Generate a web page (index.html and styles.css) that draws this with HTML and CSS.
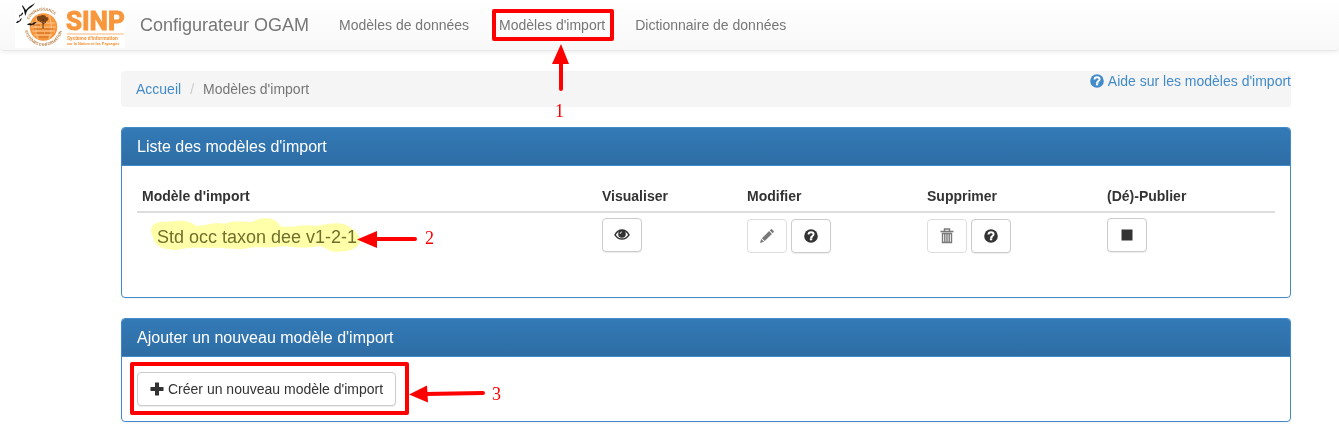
FILE: index.html
```html
<!DOCTYPE html>
<html lang="fr">
<head>
<meta charset="utf-8">
<title>Configurateur OGAM</title>
<link rel="stylesheet" href="styles.css">
</head>
<body>
<svg class="defs" aria-hidden="true">
  <symbol id="i-question" viewBox="0 0 14 14"><circle cx="7" cy="7" r="6.8" fill="currentColor"/><path d="M4.500 5.600C4.500 3.900 5.500 3.200 7.100 3.200s2.500.8 2.500 2c0 1.600-2 1.600-2 3.200H6.200" fill="none" stroke="#fff" stroke-width="1.900"/><rect x="5.900" y="9.300" width="2.300" height="2" fill="#fff"/></symbol>
  <symbol id="i-eye" viewBox="0 0 16 14"><path d="M1 6.800C3 3.500 5.300 2.100 8 2.100s5 1.400 7 4.700c-2 3-4.300 4.300-7 4.300S3 9.800 1 6.800z" fill="none" stroke="currentColor" stroke-width="1.500"/><circle cx="8" cy="5.900" r="3.800" fill="currentColor"/><path d="M6.200 5.800a2 2 0 0 1 1.600-1.900" fill="none" stroke="#fff" stroke-width="1"/></symbol>
  <symbol id="i-pencil" viewBox="0 0 14 14"><path d="M0 14l1.200-4 2.800 2.800zM1.900 9.300l7.200-7.200 2.800 2.800-7.200 7.200zM9.800 1.400l1-1c.4-.4.900-.4 1.300 0l1.500 1.500c.4.4.4.9 0 1.300l-1 1z" fill="currentColor"/></symbol>
  <symbol id="i-trash" viewBox="0 0 14 16"><path d="M4.500 3V1h5v2M.5 3.500h13M2.500 5.500h9v9h-9zM4.800 5.500v9M7 5.500v9M9.200 5.500v9" fill="none" stroke="currentColor" stroke-width="1.400"/></symbol>
  <symbol id="i-stop" viewBox="0 0 14 14"><path d="M1.500 1.500h11v11h-11z" fill="currentColor"/></symbol>
  <symbol id="i-plus" viewBox="0 0 14 14"><path d="M5 .5h4V5h4.500v4H9v4.500H5V9H.5V5H5z" fill="currentColor"/></symbol>
</svg>

<header class="navbar">
  <a class="logo" href="#" aria-label="SINP">
    <svg class="logo-art" viewBox="0 0 110 46">
      <defs><path id="ring" d="M12.500 24.500a16 16 0 0 1 32 0"/><path id="ring-low" d="M9.500 25a19 19 0 0 0 38 0"/></defs>
      <rect width="110" height="46" fill="#fff"/>
      <circle cx="28.500" cy="25" r="13.800" fill="#f8963c"/>
      <g fill="none" stroke="#fcd3a4" stroke-width=".8"><path d="M17 21h23M16 25h25M17 29h23M19 33h18"/><path d="M23 13c-3 8-3 16 0 24M34 13c3 8 3 16 0 24"/></g>
      <g fill="none" stroke="#c46a20" stroke-width=".9"><path d="M18 23h7M19 27h8M29 27h9M21 31h8M30 31h6M24 35h9"/></g>
      <path d="M22 17c-1-2 1-4 3-3 2-2 6-1 6 1 3 0 3 3 1 4-2 2-4 1-5 0-2 1-5 0-5-2z" fill="#7c4316"/><path d="M28 17v10M28 22l3-2M28 21l-3-2" stroke="#5b310e" fill="none"/>
      <text class="logo-ring"><textPath href="#ring" startOffset="14%">CONNAISSANCE</textPath></text>
      <text class="logo-ring"><textPath href="#ring-low" startOffset="6%">SYSTÈMES D'INFORMATION</textPath></text>
      <path d="M1 21c2-3 2-2 3-2s0-2 3-3c-1 2-1 3-3 4-1 1-2 1-3 1zM4 16c0-4 1-4 2-3 1-3 2-3 2-1-1 1-2 2-3 2l-1 2zM7 3c2 1 2 3 4 5 3-4 6-5 9-7-2 4-6 5-8 8-1 2-1 4-2 5 0-3-1-4-1-6-1-2-2-3-2-5zM12 23c3-3 4-1 5-1 1-2 4-2 5-2-2 1-3 3-5 3-2 1-2 0-5 0z" fill="#181818"/>
      <text class="logo-name" x="51" y="28">SINP</text>
      <path d="M52 32h57" stroke="#f8963c" stroke-width=".7"/>
      <text class="logo-line" x="52" y="38">Système d'Information</text>
      <text class="logo-small" x="52" y="43">sur la Nature et les Paysages</text>
    </svg>
  </a>
  <a class="brand" href="#">Configurateur OGAM</a>
  <nav class="nav">
    <a href="#">Modèles de données</a>
    <a href="#">Modèles d'import</a>
    <a href="#">Dictionnaire de données</a>
  </nav>
</header>

<main class="container">
  <div class="topline">
    <nav class="breadcrumb" aria-label="Fil d'Ariane"><a href="#">Accueil</a><span class="sep">/</span><span>Modèles d'import</span></nav>
    <a class="help" href="#"><svg class="icon"><use href="#i-question"/></svg>Aide sur les modèles d'import</a>
  </div>

  <section class="panel">
    <h3 class="panel-title">Liste des modèles d'import</h3>
    <div class="panel-body">
      <table class="models">
        <thead>
          <tr><th>Modèle d'import</th><th class="col-view">Visualiser</th><th class="col-action">Modifier</th><th class="col-action">Supprimer</th><th class="col-publish">(Dé)-Publier</th></tr>
        </thead>
        <tbody>
          <tr>
            <td class="model-name">Std occ taxon dee v1-2-1</td>
            <td><button class="btn btn-icon" aria-label="Visualiser"><svg class="icon icon-eye"><use href="#i-eye"/></svg></button></td>
            <td><div class="pair"><button class="btn btn-icon" disabled aria-label="Modifier"><svg class="icon"><use href="#i-pencil"/></svg></button><button class="btn btn-icon" aria-label="Aide modifier"><svg class="icon"><use href="#i-question"/></svg></button></div></td>
            <td><div class="pair"><button class="btn btn-icon" disabled aria-label="Supprimer"><svg class="icon icon-trash"><use href="#i-trash"/></svg></button><button class="btn btn-icon" aria-label="Aide supprimer"><svg class="icon"><use href="#i-question"/></svg></button></div></td>
            <td><button class="btn btn-icon" aria-label="Dépublier"><svg class="icon"><use href="#i-stop"/></svg></button></td>
          </tr>
        </tbody>
      </table>
    </div>
  </section>

  <section class="panel">
    <h3 class="panel-title">Ajouter un nouveau modèle d'import</h3>
    <div class="panel-body">
      <button class="btn"><svg class="icon"><use href="#i-plus"/></svg>Créer un nouveau modèle d'import</button>
    </div>
  </section>
</main>

<svg class="marker" width="500" height="430" viewBox="0 0 500 430" aria-hidden="true">
  <path d="M151 231C150 223 160 221 168 222C178 220 190 220 196 226C206 226 216 221 224 224C232 220 242 222 252 222C262 216 276 217 280 226C292 229 302 223 315 226C328 224 342 220 351 228C358 233 363 240 359 244C355 251 345 251 337 252C328 252 326 247 319 246C305 249 294 247 283 246C269 249 256 246 248 248C237 251 226 247 212 248C200 248 186 247 178 250C168 250 157 248 154 241C154 238 151 235 151 231Z"/>
</svg>
<svg class="notes" width="700" height="430" viewBox="0 0 700 430">
  <g class="frame"><rect x="494" y="11" width="118" height="28"/><rect x="132" y="364" width="275" height="49"/></g>
  <g class="shaft"><path d="M561 61v28M374 239h41M425 394l58-1"/></g>
  <g class="head"><path d="M561 44l-9 20h17zM357 239.500l20-8.500v17zM409 394.500l18-9 1 17z"/></g>
  <text x="555" y="117">1</text><text x="425" y="244">2</text><text x="492" y="400">3</text>
</svg>
</body>
</html>
```
FILE: styles.css
```css
* { box-sizing: border-box; }
body {
  margin: 0;
  position: relative;
  background: #fff;
  color: #333;
  font: 14px/20px "Liberation Sans", Arial, sans-serif;
}
a { color: #428bca; text-decoration: none; }
.defs { display: none; }

.navbar {
  display: flex;
  align-items: center;
  height: 51px;
  padding-left: 15px;
  background: linear-gradient(#fff, #f8f8f8);
  border-bottom: 1px solid #e7e7e7;
  border-radius: 0 0 4px 4px;
  box-shadow: 0 1px 5px rgba(0, 0, 0, .075);
}
.navbar a { color: #777; }
.logo { display: flex; }
.logo-art { width: 110px; height: 46px; }
.logo-art text { fill: #f8963c; font-family: Roboto, "Liberation Sans", sans-serif; font-weight: bold; }
.logo-art .logo-name { font-size: 26px; stroke: #f8963c; stroke-width: 1px; }
.logo-art .logo-line { font-size: 5px; }
.logo-art .logo-small { font-size: 4px; }
.logo-art .logo-ring { font-size: 4px; fill: #c08a54; }
.brand { margin-left: 15px; font-size: 18px; }
.nav { display: flex; gap: 30px; margin-left: 30px; }

.container { margin: 20px 48px 0 121px; }
.topline {
  display: flex;
  justify-content: space-between;
  align-items: flex-start;
  margin-bottom: 20px;
  background: #f5f5f5;
  border-radius: 4px;
}
.breadcrumb { padding: 8px 15px; color: #777; }
.sep { padding: 0 9px; color: #ccc; }
.help { display: flex; align-items: center; gap: 4px; }

.icon { width: 14px; height: 14px; flex: none; }
.icon-eye { width: 16px; }
.icon-trash { height: 16px; }

.panel {
  margin-bottom: 20px;
  border: 1px solid #428bca;
  border-radius: 4px;
  box-shadow: 0 1px 2px rgba(0, 0, 0, .05);
}
.panel-title {
  margin: 0;
  padding: 10px 15px;
  border-bottom: 1px solid #428bca;
  border-radius: 3px 3px 0 0;
  background: linear-gradient(#337ab7, #2e6da4);
  color: #fff;
  font-size: 16px;
  font-weight: normal;
  line-height: 17px;
}
.panel-body { padding: 15px; }

.models { width: 100%; margin-bottom: 20px; border-collapse: separate; border-spacing: 0; table-layout: fixed; }
.models th { padding: 5px; border-bottom: 2px solid #ddd; text-align: left; }
.models td { height: 49px; padding: 5px; vertical-align: top; }
.models .model-name { padding: 14px 5px 5px 20px; color: #707040; font-size: 18px; }
.col-view { width: 145px; }
.col-action { width: 180px; }
.col-publish { width: 173px; }

.btn {
  display: inline-flex;
  align-items: center;
  justify-content: center;
  gap: 4px;
  height: 34px;
  padding: 6px 12px;
  border: 1px solid #ccc;
  border-radius: 4px;
  background: #fff;
  box-shadow: 0 1px 1px rgba(0, 0, 0, .075);
  color: #333;
  font: inherit;
}
.btn-icon { width: 40px; padding: 6px; }
.btn:disabled { opacity: .65; box-shadow: none; }
.pair { display: flex; gap: 4px; padding-top: 1px; }

.marker, .notes { position: absolute; top: 0; left: 0; pointer-events: none; }
.marker { mix-blend-mode: multiply; fill: #ffffaa; }
.frame { fill: none; stroke: #f00; stroke-width: 4; stroke-linejoin: round; }
.shaft { fill: none; stroke: #f00; stroke-width: 4; stroke-linecap: round; }
.head { fill: #f00; }
.notes text { fill: #f00; font: 18px "Liberation Serif", serif; }
```
